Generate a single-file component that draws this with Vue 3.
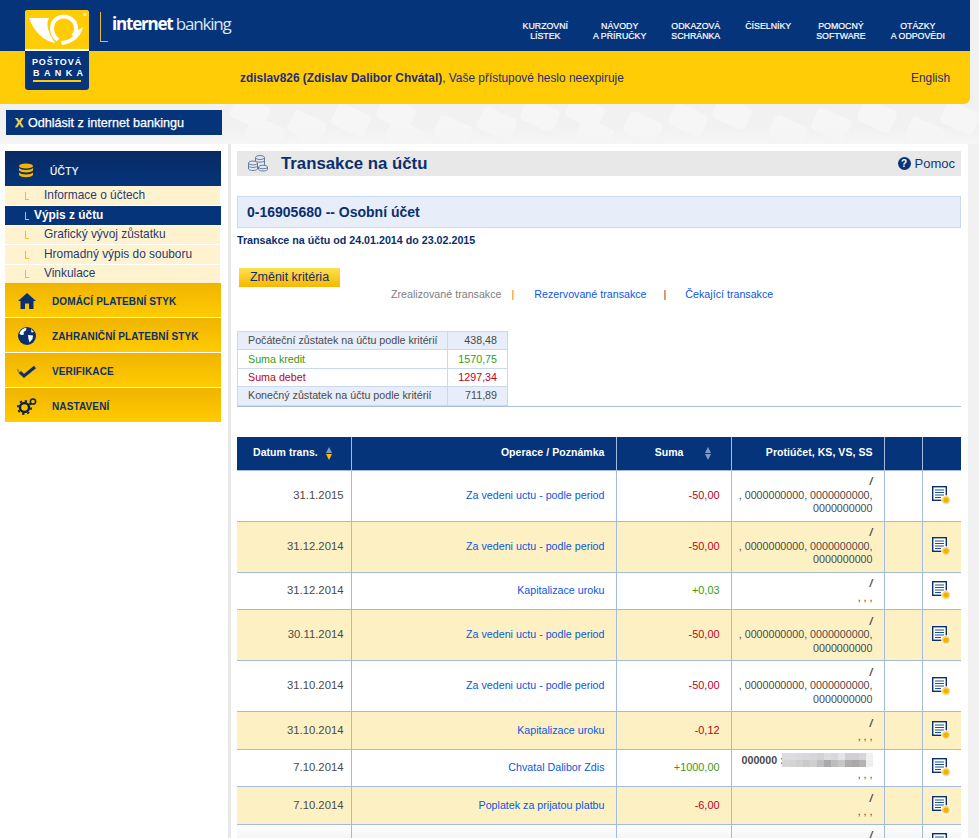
<script setup>
const nav = [
  ['KURZOVNÍ', 'LÍSTEK'],
  ['NÁVODY', 'A PŘÍRUČKY'],
  ['ODKAZOVÁ', 'SCHRÁNKA'],
  ['ČÍSELNÍKY'],
  ['POMOCNÝ', 'SOFTWARE'],
  ['OTÁZKY', 'A ODPOVĚDI']
]
const subs = [
  { t: 'Informace o účtech' },
  { t: 'Výpis z účtu', active: true },
  { t: 'Grafický vývoj zůstatku' },
  { t: 'Hromadný výpis do souboru' },
  { t: 'Vinkulace' }
]
const summary = [
  { l: 'Počáteční zůstatek na účtu podle kritérií', v: '438,48', c: 'tint' },
  { l: 'Suma kredit', v: '1570,75', c: 'green' },
  { l: 'Suma debet', v: '1297,34', c: 'red' },
  { l: 'Konečný zůstatek na účtu podle kritérií', v: '711,89', c: 'tint' }
]
const full = ['/', ', 0000000000, 0000000000,', '0000000000']
const short = ['/', ', , ,']
const rows = [
  { d: '31.1.2015', o: 'Za vedeni uctu - podle period', s: '-50,00', p: full },
  { d: '31.12.2014', o: 'Za vedeni uctu - podle period', s: '-50,00', p: full },
  { d: '31.12.2014', o: 'Kapitalizace uroku', s: '+0,03', p: short },
  { d: '30.11.2014', o: 'Za vedeni uctu - podle period', s: '-50,00', p: full },
  { d: '31.10.2014', o: 'Za vedeni uctu - podle period', s: '-50,00', p: full },
  { d: '31.10.2014', o: 'Kapitalizace uroku', s: '-0,12', p: short },
  { d: '7.10.2014', o: 'Chvatal Dalibor Zdis', s: '+1000,00', p: short, masked: true },
  { d: '7.10.2014', o: 'Poplatek za prijatou platbu', s: '-6,00', p: short },
  { d: '', o: '', s: '', p: short }
]
const blur = [
  '#dcdce2','#dcdce2','#dadade','#d8d8dc','#d6d6da','#d2d2d6','#dcdcdf','#d8d8dc','#e4e4e8','#cfcfd4','#cfcfd4','#d6d6da','#f0f0f2',
  '#d6d6d6','#d4d4d4','#d0d0d0','#cacaca','#cfcfcf','#bfbfbf','#aaa8a8','#bdbbbb','#c6c6c6','#aeacac','#aaa8a8','#b4b2b2','#eeeeee'
]
const tiles = [
  [250,8],[265,29],[307,23],[351,16],[396,9],[405,32],[453,28],[497,20],[540,11],[585,8],[595,31],
  [643,24],[688,16],[732,9],[788,28],[831,21],[877,12],[925,30],[960,14]
]
</script>

<template>
  <div class="page">
    <svg class="pattern" width="979" height="40" aria-hidden="true">
      <defs>
        <linearGradient id="fade" x1="0" y1="0" x2="0" y2="1">
          <stop offset="0.55" stop-color="#f5f5f5" stop-opacity="0" />
          <stop offset="1" stop-color="#f5f5f5" stop-opacity="1" />
        </linearGradient>
      </defs>
      <rect v-for="(t, i) in tiles" :key="i" :x="t[0] - 18" :y="t[1] - 12" width="36" height="24" rx="5"
            fill="#f6f6f6" :transform="`rotate(25 ${t[0]} ${t[1]})`" />
      <rect x="0" y="0" width="979" height="40" fill="url(#fade)" />
    </svg>

    <div class="logo">
      <svg class="logo-top" viewBox="0 0 64 39" width="64" height="39" aria-hidden="true">
        <path fill="#fff" d="M4 8 L24 8 C20 14 24 24 30 33 C19 31 9 22 4 8Z" />
        <path fill="none" stroke="#fff" stroke-width="4" d="M33 30 C25 24 25 12 33 8 C41 4 50 9 51 17 C51.500 21 50 24 48 26" />
        <path fill="#fff" d="M58 17 C56 27 47 34 37 35 L36 31 C43 31 49 27 52 21Z" />
        <circle cx="60" cy="4.500" r="1.800" fill="#ffe9a0" />
      </svg>
      <div class="logo-bottom">
        <span class="logo-a">POŠTOVÁ</span>
        <span class="logo-b">BANKA</span>
      </div>
    </div>

    <header class="head">
      <div class="blue">
        <div class="brand">
          <span class="bracket"></span>
          <span class="brand-text"><b>internet</b> banking</span>
        </div>
        <nav class="nav">
          <a v-for="n in nav" :key="n[0]" class="nav-item">
            <span v-for="l in n" :key="l">{{ l }}</span>
          </a>
        </nav>
      </div>
      <div class="yellow">
        <div class="user"><b>zdislav826 (Zdislav Dalibor Chvátal)</b>, Vaše přístupové heslo neexpiruje</div>
        <a class="lang">English</a>
      </div>
    </header>

    <div class="logout-row">
      <a class="logout"><b>X</b> Odhlásit z internet bankingu</a>
    </div>

    <div class="main">
      <aside class="side">
        <div class="acc-head">
          <svg width="20" height="16" viewBox="0 0 20 16" aria-hidden="true">
            <g fill="#f7b500">
              <ellipse cx="10" cy="3" rx="7" ry="2.600" />
              <path d="M3 5 C5 7.500 15 7.500 17 5 V7.500 C15 10 5 10 3 7.500Z" />
              <path d="M3 9.500 C5 12 15 12 17 9.500 V12 C15 15 5 15 3 12Z" />
            </g>
          </svg>
          <span>ÚČTY</span>
        </div>
        <ul class="subs">
          <li v-for="s in subs" :key="s.t" :class="{ active: s.active }">
            <i class="ell"></i><span>{{ s.t }}</span>
          </li>
        </ul>
        <div class="menu">
          <svg width="20" height="18" viewBox="0 0 20 18" aria-hidden="true">
            <path fill="#0b2f6e" d="M10 1 L19 9 H16.500 V17 H12 V11.500 H8 V17 H3.500 V9 H1Z" />
          </svg>
          <span>DOMÁCÍ PLATEBNÍ STYK</span>
        </div>
        <div class="menu">
          <svg width="20" height="20" viewBox="0 0 20 20" aria-hidden="true">
            <circle cx="10" cy="10" r="9" fill="#0b2f6e" />
            <path fill="#fff" d="M3 6 C5 2.500 8 2 9.500 2 L9 4.500 L6.500 6 L7 8.500 L4.500 9 L2.500 8Z" />
            <path fill="#fff" d="M11 9 L16 9.500 L15.500 13 L12.500 16.500 L11.500 13Z" />
            <path fill="#fff" d="M14 3 L17 6 L14.500 6.500Z" />
          </svg>
          <span>ZAHRANIČNÍ PLATEBNÍ STYK</span>
        </div>
        <div class="menu">
          <svg width="20" height="16" viewBox="0 0 20 16" aria-hidden="true">
            <path fill="none" stroke="#a98a20" stroke-width="2" d="M0 6 L4 12" />
            <path fill="none" stroke="#0b2f6e" stroke-width="3" d="M3 9 L7 13 L18 4" />
          </svg>
          <span>VERIFIKACE</span>
        </div>
        <div class="menu">
          <svg width="20" height="18" viewBox="0 0 20 18" aria-hidden="true">
            <circle cx="7.500" cy="10.500" r="4.500" fill="none" stroke="#10203f" stroke-width="2.400" />
            <circle cx="7.500" cy="10.500" r="6.600" fill="none" stroke="#10203f" stroke-width="1.800" stroke-dasharray="2.300 2.900" />
            <circle cx="16" cy="4.500" r="2.600" fill="none" stroke="#10203f" stroke-width="1.500" />
          </svg>
          <span>NASTAVENÍ</span>
        </div>
      </aside>

      <div class="strip"></div>

      <section class="content">
        <div class="title-bar">
          <svg width="20" height="17" viewBox="0 0 20 17" aria-hidden="true">
            <g fill="none" stroke="#5f7fa8" stroke-width="1">
              <ellipse cx="12" cy="2.500" rx="4.500" ry="2" />
              <path d="M7.500 2.500 V9 M16.500 2.500 V10" />
              <path d="M7.500 6 C9 7.500 15 7.500 16.500 6" />
              <ellipse cx="5" cy="8" rx="4.500" ry="2" fill="#e8e8e8" />
              <path d="M0.500 8 V14 C2 16 8 16 9.500 14 V8 M0.500 11 C2 13 8 13 9.500 11" />
              <ellipse cx="15" cy="12" rx="4.500" ry="1.800" fill="#e8e8e8" />
              <path d="M10.500 12 V14.500 C12 16.500 18 16.500 19.500 14.500 V12" />
            </g>
          </svg>
          <h1>Transakce na účtu</h1>
          <a class="help"><i>?</i>Pomoc</a>
        </div>

        <div class="account">0-16905680 -- Osobní účet</div>
        <div class="range">Transakce na účtu od 24.01.2014 do 23.02.2015</div>

        <button class="change">Změnit kritéria</button>

        <div class="tabs">
          <span class="tab-on">Zrealizované transakce</span><i class="sep1">|</i>
          <a>Rezervované transakce</a><i class="sep2">|</i>
          <a>Čekající transakce</a>
        </div>

        <table class="sum">
          <colgroup><col class="s1" /><col class="s2" /></colgroup>
          <tbody>
            <tr v-for="r in summary" :key="r.l" :class="r.c">
              <td>{{ r.l }}</td>
              <td class="num">{{ r.v }}</td>
            </tr>
          </tbody>
        </table>
        <div class="rule"></div>

        <table class="tx">
          <colgroup>
            <col class="c1" /><col class="c2" /><col class="c3" />
            <col class="c4" /><col class="c5" /><col class="c6" />
          </colgroup>
          <thead>
            <tr>
              <th><div class="th-date">Datum trans.<span class="sort on"></span></div></th>
              <th class="r">Operace / Poznámka</th>
              <th><div class="th-sum">Suma<span class="sort"></span></div></th>
              <th class="r">Protiúčet, KS, VS, SS</th>
              <th></th>
              <th></th>
            </tr>
          </thead>
          <tbody>
            <tr v-for="(r, i) in rows" :key="i" :class="{ odd: i % 2 === 1 }">
              <td class="date">{{ r.d }}</td>
              <td class="r"><a class="link">{{ r.o }}</a></td>
              <td class="r" :class="r.s[0] === '+' ? 'plus' : 'minus'">{{ r.s }}</td>
              <td class="r acct">
                <div v-if="r.masked" class="masked">
                  <b>000000 :</b>
                  <span class="pix"><i v-for="(c, k) in blur" :key="k" :style="{ background: c }"></i></span>
                </div>
                <div v-else class="slash">/</div>
                <div v-for="l in r.p.slice(1)" :key="l">{{ l }}</div>
              </td>
              <td></td>
              <td class="doc">
                <span class="docicon">
                  <svg width="19" height="19" viewBox="0 0 19 19" aria-hidden="true">
                    <rect x="0.700" y="0.700" width="13.600" height="13.600" fill="#fff" stroke="#0b2f6e" stroke-width="1.400" />
                    <path stroke="#1d4f96" stroke-width="1" d="M3 4 H12 M3 6.500 H12 M3 9 H12 M3 11.500 H9" />
                    <circle cx="14" cy="14" r="4.800" fill="#fff" />
                    <circle cx="14" cy="14" r="4.100" fill="#f9d978" />
                    <circle cx="14" cy="14" r="2.600" fill="#f6ae00" />
                  </svg>
                </span>
              </td>
            </tr>
          </tbody>
        </table>
      </section>
    </div>
  </div>
</template>

<style>
html, body { margin: 0; background: #f1f1f1; }
</style>

<style scoped>
.page {
  position: relative;
  width: 979px;
  height: 838px;
  overflow: hidden;
  background: #f1f1f1;
  font-family: "Liberation Sans", Arial, sans-serif;
  color: #4a4a4a;
}
.pattern { position: absolute; left: 0; top: 104px; }

.logo {
  position: absolute;
  left: 25px;
  top: 10px;
  width: 64px;
  height: 80px;
  z-index: 2;
  display: flex;
  flex-direction: column;
  border-radius: 3px;
  overflow: hidden;
  background: #fff;
}
.logo-top { background: #ffcc05; flex: none; margin-bottom: 2px; }
.logo-bottom {
  flex: 1;
  background: #05347b;
  color: #fff;
  font-weight: 700;
  font-size: 9px;
  line-height: 11px;
  display: flex;
  flex-direction: column;
  align-items: center;
  padding-top: 6px;
}
.logo-a { letter-spacing: 0.9px; }
.logo-b {
  letter-spacing: 4.4px;
  padding-bottom: 1px;
  border-bottom: 2px solid #ffcc05;
  width: 48px;
  text-align: center;
}

.head { width: 970px; position: relative; }
.blue {
  height: 51px;
  background: #05347b;
  display: flex;
  justify-content: space-between;
  box-sizing: border-box;
  padding-right: 25px;
}
.brand { display: flex; margin-left: 100px; padding-top: 12px; }
.bracket {
  width: 7px;
  height: 29px;
  border-left: 1px solid #e9b93a;
  border-bottom: 1px solid #e9b93a;
}
.brand-text {
  margin-left: 4px;
  margin-top: 1px;
  color: #dbe6f3;
  font-family: "Open Sans", sans-serif;
  font-size: 17px;
  line-height: 22px;
  letter-spacing: -1.2px;
}
.brand-text b { color: #fff; font-weight: 700; }
.nav { display: flex; gap: 25px; padding-top: 21px; }
.nav-item {
  display: flex;
  flex-direction: column;
  align-items: center;
  color: #fff;
  font-size: 8.800px;
  line-height: 10px;
  -webkit-text-stroke: 0.2px #fff;
}
.yellow {
  height: 53px;
  background: #ffcc05;
  border-bottom-right-radius: 6px;
  display: flex;
  justify-content: space-between;
  align-items: center;
  color: #272c74;
  font-size: 11.900px;
  padding: 0 20px 0 240px;
}
.user b { font-weight: 700; }

.logout-row { height: 40px; box-sizing: border-box; padding: 6px 0 0 6px; position: relative; }
.logout {
  display: block;
  width: 216px;
  height: 25px;
  box-sizing: border-box;
  padding-left: 9px;
  padding-top: 1px;
  background: #05347b;
  color: #fff;
  font-size: 12.600px;
  line-height: 24px;
  -webkit-text-stroke: 0.25px #fff;
}
.logout b { color: #ffcc05; font-weight: 700; margin-right: 1px; }

.main { display: flex; align-items: stretch; height: 694px; width: 968px; position: relative; }
.side {
  width: 228px;
  flex: none;
  box-sizing: border-box;
  background: #fff;
  padding: 7px 7px 0 5px;
}
.strip { width: 3px; flex: none; background: #e8e8e8; }
.acc-head {
  height: 35px;
  box-sizing: border-box;
  padding-top: 5px;
  background: linear-gradient(#082a62, #05347b);
  display: flex;
  align-items: center;
  color: #fff;
  font-size: 10px;
  padding-left: 11px;
  letter-spacing: 0.4px;
  -webkit-text-stroke: 0.2px #fff;
}
.acc-head span { margin-left: 14px; }
.subs { list-style: none; margin: 0; padding: 0; width: 215px; }
.subs li {
  height: 18.500px;
  margin-bottom: 1px;
  padding-bottom: 1px;
  background: #fff3cf;
  display: flex;
  align-items: center;
  color: #1f3a75;
  font-size: 11.900px;
  padding-left: 20px;
  box-sizing: border-box;
}
.subs li:last-child { margin-bottom: 0; }
.subs .ell {
  width: 3px;
  height: 7px;
  border-left: 1px solid #f1bb2a;
  border-bottom: 1px solid #f1bb2a;
  margin: 2px 15px 0 0;
}
.subs li.active { background: #05347b; color: #fff; font-weight: 700; width: 216px; height: 19px; padding-bottom: 0; }
.subs li.active .ell { margin-right: 5px; }
.menu {
  height: 34px;
  box-sizing: border-box;
  padding-top: 2px;
  margin-bottom: 1px;
  background: linear-gradient(#f0b400, #ffcb00);
  display: flex;
  align-items: center;
  color: #0b2f6e;
  font-size: 10px;
  font-weight: 700;
  letter-spacing: 0.12px;
  padding-left: 12px;
}
.menu svg { flex: none; margin-right: 15px; }

.content {
  flex: 1;
  min-width: 0;
  background: #fff;
  box-sizing: border-box;
  padding: 7px 7px 0 6px;
}
.title-bar {
  height: 25px;
  background: #e8e8e8;
  display: flex;
  align-items: center;
  padding-left: 11px;
}
.title-bar h1 {
  margin: 1px 0 0 13px;
  font-size: 16.800px;
  font-weight: 700;
  color: #0b2f6e;
}
.help {
  margin-left: auto;
  margin-right: 6px;
  display: flex;
  align-items: center;
  font-size: 13px;
  color: #0b3a85;
}
.help i {
  width: 13px;
  height: 13px;
  border-radius: 50%;
  background: #05347b;
  color: #fff;
  font-style: normal;
  font-weight: 700;
  font-size: 10px;
  line-height: 13px;
  text-align: center;
  margin-right: 4px;
}
.account {
  margin-top: 20px;
  height: 32px;
  box-sizing: border-box;
  border: 1px solid #c8d9f0;
  background: #e7eef9;
  padding-left: 9px;
  font-size: 14px;
  font-weight: 700;
  line-height: 30px;
  color: #0b2f6e;
}
.range {
  margin-top: 5px;
  font-size: 10.700px;
  line-height: 14px;
  font-weight: 700;
  color: #0b2f6e;
}
.change {
  display: block;
  margin: 21px 0 0 2px;
  width: 101px;
  height: 19px;
  padding: 0;
  border: 0;
  background: linear-gradient(#ffe050, #f6b800);
  color: #0b2f6e;
  font-family: inherit;
  font-size: 12.500px;
  line-height: 19px;
}
.tabs {
  display: flex;
  margin: 0 0 0 154px;
  height: 14px;
  font-size: 10.700px;
  line-height: 14px;
  color: #0b57e0;
}
.tab-on { color: #808080; }
.tabs i { font-style: normal; }
.sep1 { color: #c48a10; margin: 0 20px 0 10px; }
.sep2 { color: #444; margin: 0 19px 0 17px; }

.sum {
  margin-top: 30px;
  border-collapse: collapse;
  width: 270px;
  table-layout: fixed;
  font-size: 10.700px;
  line-height: 13px;
}
.s1 { width: 210px; }
.s2 { width: 60px; }
.sum td {
  border: 1px solid #c8d9f0;
  padding: 2.200px 4px 2.200px 10px;
  height: 13px;
  white-space: nowrap;
}
.sum .num { text-align: right; padding-right: 10px; }
.sum .tint td { background: #e7eef9; }
.sum .green td { color: #3a9a10; }
.sum .red td { color: #c0001a; }
.rule { height: 1px; background: #a9c0dd; }

.tx {
  margin-top: 30px;
  width: 724px;
  border-collapse: collapse;
  table-layout: fixed;
  font-size: 10.700px;
  line-height: 13.500px;
}
.c1 { width: 114px; }
.c2 { width: 265px; }
.c3 { width: 115px; }
.c4 { width: 153px; }
.c5 { width: 38px; }
.c6 { width: 39px; }
.tx th {
  height: 33px;
  background: #05347b;
  color: #fff;
  font-size: 10.500px;
  font-weight: 700;
  border: 1px solid #a3bcdd;
  border-top: 0;
  padding: 0 11px 0 0;
  letter-spacing: 0.05px;
}
.tx th:first-child { border-left: 0; }
.tx th:last-child { border-right: 0; }
.tx .r { text-align: right; }
.th-date { display: flex; align-items: center; padding-left: 16px; white-space: nowrap; gap: 8px; }
.th-sum { display: flex; align-items: center; justify-content: flex-end; gap: 21px; padding-right: 8px; }
.sort { position: relative; display: block; width: 7px; height: 13px; flex: none; }
.sort::before, .sort::after {
  content: "";
  position: absolute;
  left: 0;
  border-left: 3.500px solid transparent;
  border-right: 3.500px solid transparent;
}
.sort::before { top: 0; border-bottom: 6px solid #7f9cc5; }
.sort::after { bottom: 0; border-top: 6px solid #7f9cc5; }
.sort.on::after { border-top-color: #f6c000; }
.tx td {
  border: 1px solid #a3bcdd;
  padding: 4.750px 11px 4.750px 8px;
  vertical-align: middle;
  color: #4a4a4a;
}
.tx td:first-child { border-left: 0; }
.tx td:last-child { border-right: 0; }
.tx tr.odd td { background: #fdf1c4; }
.tx tr:last-child td { background: linear-gradient(#fff, #f5f5f5 13px); }
.tx .date { text-align: right; padding-right: 7px; font-size: 11.300px; }
.tx .link { color: #0b57e0; }
.tx td.plus { color: #3a9a10; font-size: 10.900px; }
.tx td.minus { color: #c0001a; font-size: 10.900px; }
.tx .acct { padding-left: 0; white-space: nowrap; }
.slash { font-weight: 700; font-style: italic; }
.masked { position: relative; text-align: left; padding-left: 10px; height: 13.500px; }
.pix {
  position: absolute;
  left: 50px;
  top: -1px;
  width: 91px;
  height: 14px;
  display: grid;
  grid-template-columns: repeat(13, 7px);
  grid-auto-rows: 7px;
}
.tx .doc { padding: 0 0 0 9px; text-align: left; }
.docicon { display: block; height: 19px; }
</style>
